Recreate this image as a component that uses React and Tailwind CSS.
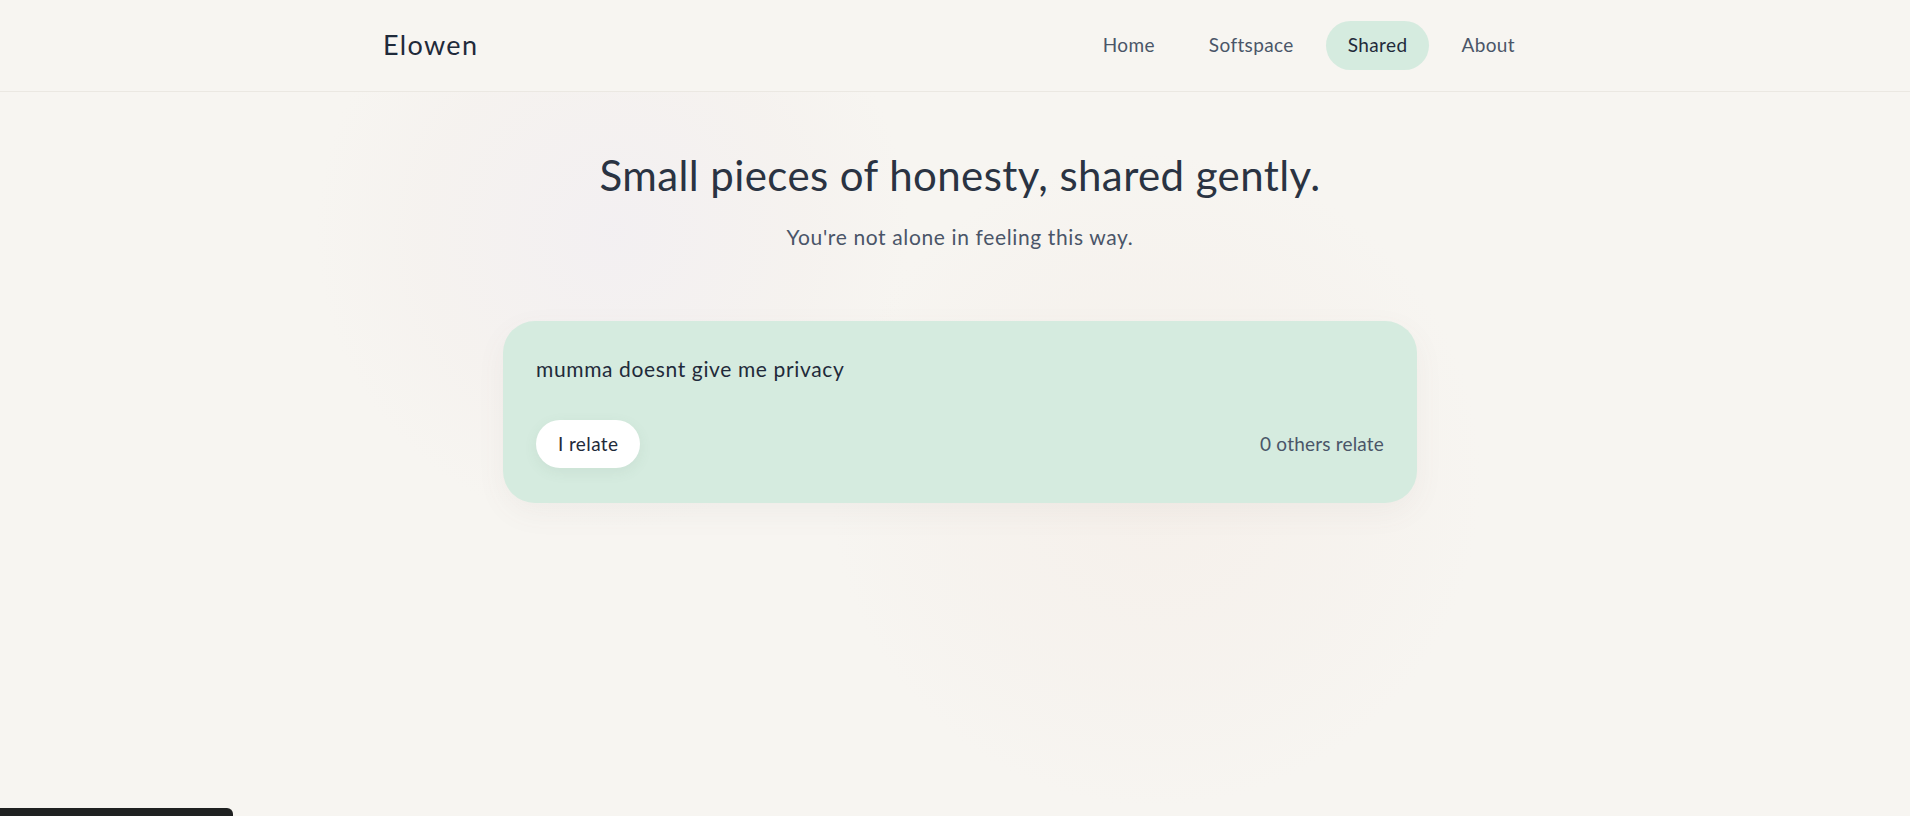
import React, { useState } from "react";

const posts = [{ id: 1, text: "mumma doesnt give me privacy", relates: 0 }];

function Navbar() {
  const links = ["Home", "Softspace", "Shared", "About"];
  const active = "Shared";

  return (
    <header className="h-[92px] border-b border-[#ebe8e2] bg-[#f7f5f1] pl-[10px]">
      <div className="mx-auto flex h-full w-[1154px] items-center justify-between">
        <h1 className="text-[27px] tracking-[0.05em] text-[#1f2a3a]">Elowen</h1>
        <nav className="flex items-center gap-[10px]">
          {links.map((link) => (
            <a
              key={link}
              href="#"
              className={`flex h-[49px] items-center rounded-full px-[22px] text-[19px] tracking-[0.02em] ${
                link === active ? "bg-[#d5ebdf] text-[#1f2a3a]" : "text-[#4a5568]"
              }`}
            >
              {link}
            </a>
          ))}
        </nav>
      </div>
    </header>
  );
}

function PostCard({ post }) {
  const [count, setCount] = useState(post.relates);

  return (
    <div className="w-[914px] rounded-[32px] bg-[#d5ebdf] px-[33px] pt-[34px] pb-[35px] shadow-[0_10px_30px_rgba(120,110,100,0.06)]">
      <p className="text-[21px] leading-[28px] tracking-[0.03em] text-[#1f2a3a]">{post.text}</p>
      <div className="mt-[37px] flex items-center justify-between">
        <button
          onClick={() => setCount(count + 1)}
          className="h-[48px] rounded-full bg-white px-[22px] text-[19px] tracking-[0.02em] text-[#1f2a3a] shadow-[0_4px_14px_rgba(80,110,90,0.08)]"
        >
          I relate
        </button>
        <span className="text-[19px] tracking-[0.01em] text-[#4a5568]">{count} others relate</span>
      </div>
    </div>
  );
}

export default function App() {
  return (
    <div className="relative min-h-[816px] overflow-hidden bg-[#f7f5f1] font-['Lato','Noto_Sans',sans-serif]">
      {/* soft background glows */}
      <div className="pointer-events-none absolute left-[313px] top-[-67px] h-[600px] w-[600px] rounded-full bg-[radial-gradient(circle,rgba(240,236,242,0.6)_0%,rgba(243,238,236,0.4)_45%,transparent_70%)]" />
      <div className="pointer-events-none absolute left-[825px] top-[150px] h-[660px] w-[660px] rounded-full bg-[radial-gradient(circle,rgba(245,238,232,0.7)_0%,rgba(245,240,235,0.45)_45%,transparent_70%)]" />

      <div className="relative">
        <Navbar />
        <main className="flex flex-col items-center pl-[10px]">
          <h2 className="mt-[59px] text-[42px] leading-[48px] tracking-[0.01em] text-[#2a3342]">
            Small pieces of honesty, shared gently.
          </h2>
          <p className="mt-[24px] text-[21px] leading-[28px] tracking-[0.03em] text-[#4a5568]">
            You're not alone in feeling this way.
          </p>
          <div className="mt-[70px]">
            {posts.map((post) => (
              <PostCard key={post.id} post={post} />
            ))}
          </div>
        </main>
      </div>

      <div className="fixed left-0 top-[808px] h-[40px] w-[233px] rounded-tr-[6px] bg-[#1f2121]" />
    </div>
  );
}
